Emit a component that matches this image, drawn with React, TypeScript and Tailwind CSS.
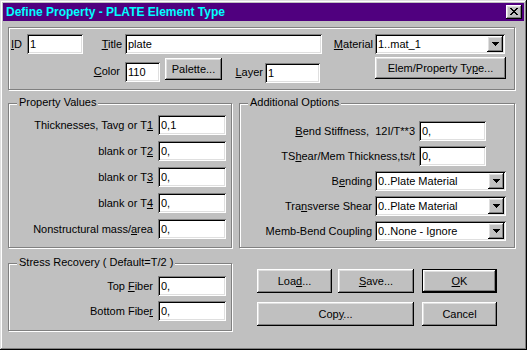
import React from 'react';

const RAISED =
  'shadow-[inset_-1px_-1px_#000,inset_1px_1px_#fff,inset_-2px_-2px_#808080,inset_2px_2px_#dfdfdf]';
const SUNKEN =
  'shadow-[inset_1px_1px_#808080,inset_-1px_-1px_#fff,inset_2px_2px_#000,inset_-2px_-2px_#dfdfdf]';

function CloseGlyph() {
  return (
    <svg width="8" height="7" viewBox="0 0 8 7" shapeRendering="crispEdges">
      <path
        fill="#000"
        d="M0 0h2v1h-2zM6 0h2v1h-2zM1 1h2v1h-2zM5 1h2v1h-2zM2 2h4v1h-4zM3 3h2v1h-2zM2 4h4v1h-4zM1 5h2v1h-2zM5 5h2v1h-2zM0 6h2v1h-2zM6 6h2v1h-2z"
      />
    </svg>
  );
}

function ArrowDown() {
  return (
    <svg width="7" height="4" viewBox="0 0 7 4" shapeRendering="crispEdges">
      <path fill="#000" d="M0 0h7v1h-7zM1 1h5v1h-5zM2 2h3v1h-3zM3 3h1v1h-1z" />
    </svg>
  );
}

function Field({ value, className = '' }: { value: string; className?: string }) {
  return (
    <div className={`flex h-[20px] items-center bg-white pl-[3px] ${SUNKEN} ${className}`}>
      {value}
    </div>
  );
}

function Combo({ value, className = '' }: { value: string; className?: string }) {
  return (
    <div className={`flex h-[20px] items-center bg-white pl-[3px] pr-[2px] ${SUNKEN} ${className}`}>
      <span className="flex-1">{value}</span>
      <span className={`flex h-[16px] w-[16px] items-center justify-center bg-[#c0c0c0] ${RAISED}`}>
        <ArrowDown />
      </span>
    </div>
  );
}

function Btn({ children, className = '' }: { children: React.ReactNode; className?: string }) {
  return (
    <div className={`flex items-center justify-center bg-[#c0c0c0] ${RAISED} ${className}`}>
      {children}
    </div>
  );
}

function Group({
  label,
  className = '',
  children,
}: {
  label?: string;
  className?: string;
  children: React.ReactNode;
}) {
  return (
    <div className={`relative border border-[#808080] shadow-[1px_1px_#fff,inset_1px_1px_#fff] ${className}`}>
      {label && (
        <span className="absolute left-[8px] top-[-8px] bg-[#c0c0c0] px-[2px] leading-[13px]">
          {label}
        </span>
      )}
      {children}
    </div>
  );
}

// label cell that sits flush against the control on its right
function Row({ label, children, labelClass }: { label: React.ReactNode; children: React.ReactNode; labelClass: string }) {
  return (
    <div className="flex items-center">
      <span className={`text-right ${labelClass}`}>{label}</span>
      {children}
    </div>
  );
}

export default function App() {
  return (
    <div className="h-[350px] w-[527px] bg-[#c0c0c0] p-[3px] font-['Liberation_Sans',Arial,sans-serif] text-[11px] leading-[13px] text-black shadow-[inset_-1px_-1px_#000,inset_1px_1px_#dfdfdf,inset_-2px_-2px_#808080,inset_2px_2px_#fff]">
      {/* title bar */}
      <div className="flex h-[18px] items-center justify-between bg-[#50007f] pl-[3px] pr-[2px]">
        <span className="text-[12px] font-bold text-[#00ffff]">Define Property - PLATE Element Type</span>
        <span className={`flex h-[14px] w-[16px] items-center justify-center bg-[#c0c0c0] pb-[1px] ${RAISED}`}>
          <CloseGlyph />
        </span>
      </div>

      {/* header group */}
      <Group className="ml-[5px] mt-[6px] h-[63px] w-[507px]">
        <div className="flex pt-[6px]">
          <Row label={<><u>I</u>D</>} labelClass="w-[18px] pr-[5px]">
            <Field value="1" className="w-[56px]" />
          </Row>
          <Row label={<><u>T</u>itle</>} labelClass="w-[42px] pr-[3px]">
            <Field value="plate" className="w-[197px]" />
          </Row>
          <Row label={<><u>M</u>aterial</>} labelClass="w-[53px] pr-[2px]">
            <Combo value="1..mat_1" className="w-[130px]" />
          </Row>
        </div>
        <div className="mt-[3px] flex items-start">
          <span className="mt-[8px] w-[116px] pr-[5px] text-right">
            <u>C</u>olor
          </span>
          <Field value="110" className="mt-[5px] w-[35px]" />
          <Btn className="ml-[5px] mt-[1px] h-[22px] w-[57px]">Palette...</Btn>
          <span className="mt-[9px] w-[43px] pr-[2px] text-right">
            <u>L</u>ayer
          </span>
          <Field value="1" className="mt-[6px] w-[55px]" />
          <Btn className="ml-[55px] h-[22px] w-[131px]">
            <span>
              Elem/Property Ty<u>p</u>e...
            </span>
          </Btn>
        </div>
      </Group>

      <div className="ml-[5px] mt-[13px] flex">
        <Group label="Property Values" className="h-[145px] w-[224px]">
          <div className="flex flex-col gap-[6px] pt-[11px]">
            <Row label={<>Thicknesses, Tavg or T<u>1</u></>} labelClass="w-[149px] pr-[5px]">
              <Field value="0,1" className="w-[68px]" />
            </Row>
            <Row label={<>blank or T<u>2</u></>} labelClass="w-[149px] pr-[5px]">
              <Field value="0," className="w-[68px]" />
            </Row>
            <Row label={<>blank or T<u>3</u></>} labelClass="w-[149px] pr-[5px]">
              <Field value="0," className="w-[68px]" />
            </Row>
            <Row label={<>blank or T<u>4</u></>} labelClass="w-[149px] pr-[5px]">
              <Field value="0," className="w-[68px]" />
            </Row>
            <Row label={<>Nonstructural mass/<u>a</u>rea</>} labelClass="w-[149px] pr-[5px]">
              <Field value="0," className="w-[68px]" />
            </Row>
          </div>
        </Group>

        <Group label="Additional Options" className="ml-[7px] h-[145px] w-[276px]">
          <div className="flex flex-col gap-[5px] pt-[17px]">
            <Row label={<><u>B</u>end Stiffness,&nbsp; 12I/T**3</>} labelClass="w-[179px] pr-[4px]">
              <Field value="0," className="w-[67px]" />
            </Row>
            <Row label={<>TS<u>h</u>ear/Mem Thickness,ts/t</>} labelClass="w-[179px] pr-[4px]">
              <Field value="0," className="w-[67px]" />
            </Row>
            <Row label={<>B<u>e</u>nding</>} labelClass="w-[135px] pr-[3px]">
              <Combo value="0..Plate Material" className="w-[131px]" />
            </Row>
            <Row label={<>Tra<u>n</u>sverse Shear</>} labelClass="w-[135px] pr-[3px]">
              <Combo value="0..Plate Material" className="w-[131px]" />
            </Row>
            <Row label="Memb-Bend Coupling" labelClass="w-[135px] pr-[3px]">
              <Combo value="0..None - Ignore" className="w-[131px]" />
            </Row>
          </div>
        </Group>
      </div>

      <div className="ml-[5px] mt-[15px] flex items-start">
        <Group label="Stress Recovery ( Default=T/2 )" className="h-[68px] w-[224px]">
          <div className="flex flex-col gap-[5px] pt-[12px]">
            <Row label={<>Top <u>F</u>iber</>} labelClass="w-[149px] pr-[5px]">
              <Field value="0," className="w-[68px]" />
            </Row>
            <Row label={<>Bottom Fibe<u>r</u></>} labelClass="w-[149px] pr-[5px]">
              <Field value="0," className="w-[68px]" />
            </Row>
          </div>
        </Group>

        <div className="ml-[25px] mt-[6px] flex flex-col gap-[9px]">
          <div className="flex">
            <Btn className="h-[24px] w-[75px]">
              <span>
                Loa<u>d</u>...
              </span>
            </Btn>
            <Btn className="ml-[6px] h-[24px] w-[76px]">
              <span>
                <u>S</u>ave...
              </span>
            </Btn>
            <div className="ml-[8px] h-[24px] w-[75px] border border-black">
              <Btn className="h-full w-full">
                <span>
                  <u>O</u>K
                </span>
              </Btn>
            </div>
          </div>
          <div className="flex">
            <Btn className="h-[24px] w-[157px]">
              <span>
                Cop<u>y</u>...
              </span>
            </Btn>
            <Btn className="ml-[8px] h-[24px] w-[75px]">Cancel</Btn>
          </div>
        </div>
      </div>
    </div>
  );
}
